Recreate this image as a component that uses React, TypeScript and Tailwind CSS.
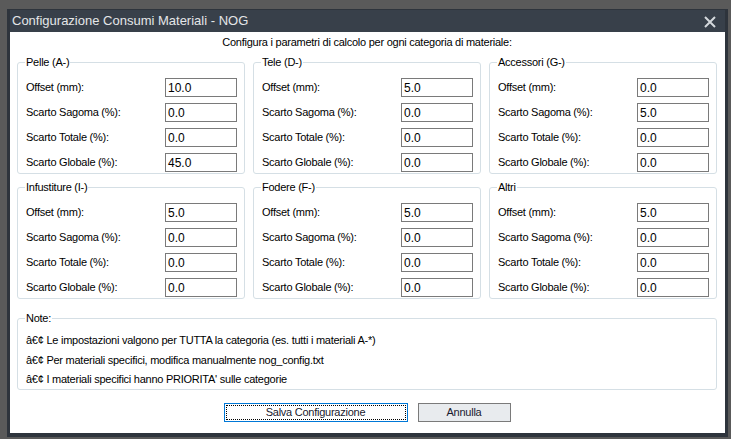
const labels = [
  "Offset (mm):",
  "Scarto Sagoma (%):",
  "Scarto Totale (%):",
  "Scarto Globale (%):",
];

const groups = [
  { title: "Pelle (A-)", values: ["10.0", "0.0", "0.0", "45.0"] },
  { title: "Tele (D-)", values: ["5.0", "0.0", "0.0", "0.0"] },
  { title: "Accessori (G-)", values: ["0.0", "5.0", "0.0", "0.0"] },
  { title: "Infustiture (I-)", values: ["5.0", "0.0", "0.0", "0.0"] },
  { title: "Fodere (F-)", values: ["5.0", "0.0", "0.0", "0.0"] },
  { title: "Altri", values: ["5.0", "0.0", "0.0", "0.0"] },
];

const notes = [
  "â€¢ Le impostazioni valgono per TUTTA la categoria (es. tutti i materiali A-*)",
  "â€¢ Per materiali specifici, modifica manualmente nog_config.txt",
  "â€¢ I materiali specifici hanno PRIORITA' sulle categorie",
];

// group box with the caption sitting over the top border
function GroupBox({ title, values }: { title: string; values: string[] }) {
  return (
    <div className="relative h-[112px] rounded-[3px] border border-[#d5dfe5] pl-[8px] pr-[7px] pt-[15px]">
      <span className="absolute -top-[7px] left-[7px] bg-white px-[1px] leading-[13px]">
        {title}
      </span>
      <div className="flex flex-col gap-[6px]">
        {labels.map((label, i) => (
          <div key={label} className="flex h-[19px] items-center justify-between">
            <span>{label}</span>
            <div className="flex h-[19px] w-[72px] items-center border border-[#7a7a7a] bg-white pl-[2px] text-[12px] tracking-normal">
              {values[i]}
            </div>
          </div>
        ))}
      </div>
    </div>
  );
}

export default function App() {
  return (
    <div
      className="h-[439px] w-[731px] overflow-hidden bg-[#5a5a5a] pl-[7px] pt-[9px] text-[11px] tracking-[-0.25px] text-black"
      style={{ fontFamily: '"Liberation Sans", Arial, sans-serif' }}
    >
      <div className="flex h-[428px] w-[721px] flex-col bg-[#2e343c] px-[3px] pb-[4px] pt-[1px]">
        {/* TITLE BAR */}
        <div className="flex h-[22px] items-center justify-between bg-[#38404a] pl-[2px] pr-[9px]">
          <span className="text-[13px] tracking-normal text-[#e4e6e8]">
            Configurazione Consumi Materiali - NOG
          </span>
          <svg width="12" height="12" viewBox="0 0 12 12" className="mt-[2px]">
            <path
              d="M1 1 L11 11 M11 1 L1 11"
              stroke="#d4d8dc"
              strokeWidth="2"
              fill="none"
            />
          </svg>
        </div>

        {/* CONTENT */}
        <div className="flex flex-1 flex-col bg-white pl-[7px] pr-[8px] pt-[4px]">
          <p className="text-center leading-[13px]">
            Configura i parametri di calcolo per ogni categoria di materiale:
          </p>

          <div className="mt-[13px] grid w-[700px] grid-cols-3 gap-x-[8px] gap-y-[13px]">
            {groups.map((g) => (
              <GroupBox key={g.title} title={g.title} values={g.values} />
            ))}
          </div>

          {/* NOTES */}
          <div className="relative mt-[19px] h-[72px] w-[700px] rounded-[3px] border border-[#d5dfe5] pl-[8px] pt-[12px]">
            <span className="absolute -top-[7px] left-[7px] bg-white px-[1px] leading-[13px]">
              Note:
            </span>
            {notes.map((n) => (
              <p key={n} className="leading-[19.5px]">
                {n}
              </p>
            ))}
          </div>

          {/* BUTTONS */}
          <div className="mt-[13px] flex justify-center gap-[10px]">
            <button className="h-[19px] w-[184px] border border-[#0078d7] bg-white text-[11px] text-[#1a1a2e] outline-1 outline-offset-[-3px] outline-black outline-dotted">
              Salva Configurazione
            </button>
            <button className="h-[19px] w-[93px] border border-[#7a7a7a] bg-[#e8ebee] text-[11px] text-[#1a1a2e]">
              Annulla
            </button>
          </div>
        </div>
      </div>
    </div>
  );
}
